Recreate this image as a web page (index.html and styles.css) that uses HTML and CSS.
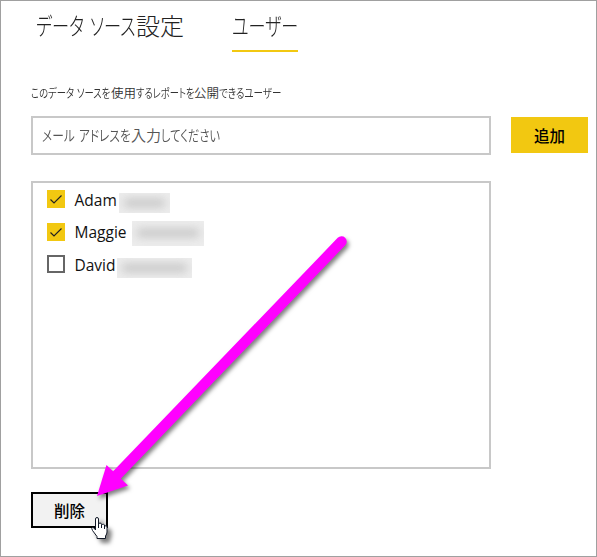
FILE: index.html
```html
<!DOCTYPE html>
<html lang="ja">
<head>
<meta charset="utf-8">
<title>データ ソース設定</title>
<link rel="stylesheet" href="styles.css">
</head>
<body>
<main class="panel">
  <nav class="tabs">
    <a class="tab tab-settings"><span class="k k-data">データ ソース</span>設定</a>
    <a class="tab tab-users active"><span class="k k-user">ユーザー</span></a>
  </nav>
  <p class="caption"><span class="k c1">このデータ ソースを</span>使用<span class="k c2">するレポートを</span>公開<span class="k c3">できるユーザー</span></p>
  <div class="entry">
    <div class="field"><span class="k f1">メール アドレスを</span>入力<span class="k f2">してください</span></div>
    <button class="add">追加</button>
  </div>
  <ul class="users">
    <li><span class="box checked"><svg viewBox="0 0 18 18"><path d="M3.5 9.5 7 13 14.5 5.5"/></svg></span><span class="name">Adam</span><span class="mask m1"><i></i></span></li>
    <li><span class="box checked"><svg viewBox="0 0 18 18"><path d="M3.5 9.5 7 13 14.5 5.5"/></svg></span><span class="name">Maggie</span><span class="mask m2"><i></i></span></li>
    <li><span class="box"></span><span class="name">David</span><span class="mask m3"><i></i></span></li>
  </ul>
  <button class="remove">削除</button>
  <svg class="arrow" viewBox="0 0 597 557">
    <path d="M341.500 241.500 114 478" stroke="#f0f" stroke-width="10.500" stroke-linecap="round"/>
    <path d="M97 496 106.500 465 128 485.500Z" fill="#f0f"/>
  </svg>
  <svg class="cursor" viewBox="0 0 18 24">
    <path d="M5.500 14V3Q5.500 1.500 7 1.500T8.500 3V8.500Q8.500 7 10 7T11.500 8.500V9.500Q12 8 13.500 8.300T14.500 10Q17 9 17 11V16Q17 18 15.500 20V22.500H7V20.500L2.500 14.500Q1 12 2.500 11.500T5.500 14M8.500 8V12M11.500 9V12M14.500 10V13"/>
  </svg>
</main>
</body>
</html>
```
FILE: styles.css
```css
* { box-sizing: border-box; }
body { margin: 0; background: #fff; font-family: "Noto Sans CJK JP", sans-serif; }
.panel {
  position: relative;
  width: 597px;
  height: 557px;
  padding: 0 8px 0 30px;
  border: 1px solid #a0a0a0;
  overflow: hidden;
}
.k {
  display: inline-block;
  white-space: nowrap;
  transform-origin: 0 50%;
  font-feature-settings: "palt";
}
.tabs { display: flex; height: 51px; padding-left: 5px; }
.tab { height: 51px; font-size: 24px; font-weight: 300; line-height: 48px; color: #222; white-space: nowrap; }
.tab-settings { width: 196px; }
.tab-users { width: 66px; border-bottom: 2px solid #f2c811; }
.k-data { width: 100px; word-spacing: 3px; transform: scaleX(.715); }
.k-user { transform: scaleX(.71); }
.caption { margin: 30px 0 0; height: 22px; font-size: 12.5px; line-height: 22px; font-weight: 350; color: #333; white-space: nowrap; }
.c1 { width: 80px; word-spacing: 1px; transform: scaleX(.745); }
.c2 { width: 58px; transform: scaleX(.74); }
.c3 { width: 62px; transform: scaleX(.76); }
.entry { display: flex; gap: 20px; margin-top: 12px; align-items: flex-start; }
.field {
  width: 460px;
  height: 39px;
  padding-left: 9px;
  border: 2px solid #c8c8c8;
  font-size: 15px;
  font-weight: 350;
  line-height: 34px;
  color: #555;
  white-space: nowrap;
}
.f1 { width: 89px; word-spacing: 2px; transform: scaleX(.78); }
.f2 { width: 60px; transform: scaleX(.75); }
button { display: block; padding: 0; font: 500 15.5px/34px "Noto Sans CJK JP", sans-serif; color: #000; }
.add { width: 77px; height: 36px; margin-top: 1px; border: 0; background: #f2c811; }
.users {
  list-style: none;
  width: 460px;
  height: 288px;
  margin: 26px 0 0;
  padding: 0 0 0 14px;
  border: 2px solid #c8c8c8;
}
.users li { display: flex; align-items: center; height: 32.5px; }
.box { width: 18px; height: 18px; border: 2px solid #666; }
.checked { border: 0; background: #f2c811; }
.box svg { display: block; fill: none; stroke: #222; stroke-width: 1.2; }
.name { margin: 1px 0 0 9.500px; font: 15.5px/22px "Open Sans", sans-serif; color: #111; }
.mask { overflow: hidden; height: 20px; margin-top: 7px; background: #ededed; }
.mask i { display: block; height: 8px; margin: 6px 5px; background: #c4c4c4; filter: blur(5px); }
.m1 { width: 51px; margin-left: 2px; }
.m2 { width: 72px; height: 25px; margin-top: 4px; margin-left: 5px; }
.m2 i { margin-top: 8px; }
.m3 { width: 75px; margin-left: 1px; }
.remove { width: 77px; height: 36px; margin-top: 23px; border: 2px solid #000; background: #f2f2f2; line-height: 32px; }
.arrow { position: absolute; left: -1px; top: -1px; width: 597px; height: 557px; fill: none; filter: drop-shadow(2px 3px 2px rgba(0, 0, 0, .5)); }
.cursor { position: absolute; left: 89px; top: 515px; width: 18px; height: 24px; fill: #fff; stroke: #111827; stroke-width: 1; filter: drop-shadow(4px 4px 2px rgba(0, 0, 0, .5)); }
```
